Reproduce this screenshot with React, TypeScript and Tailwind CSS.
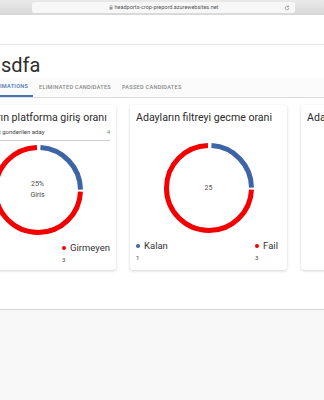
import React from 'react';

const font = { fontFamily: 'Roboto, "Liberation Sans", sans-serif' };

function Donut({ label, sub }: { label: string; sub?: string }) {
  // 25% blue, 75% red ring
  const c = 2 * Math.PI * 42.5;
  return (
    <div className="relative w-[90px] h-[90px]">
      <svg width="90" height="90" viewBox="0 0 90 90" className="-rotate-90">
        <circle cx="45" cy="45" r="42.5" fill="none" stroke="#3d64a5" strokeWidth="5"
          strokeDasharray={`${c * 0.25 - 3} ${c}`} strokeDashoffset={-2.5} />
        <circle cx="45" cy="45" r="42.5" fill="none" stroke="#f50000" strokeWidth="5"
          strokeDasharray={`${c * 0.75 - 3} ${c}`} strokeDashoffset={-(c * 0.25 + 1.5)} />
      </svg>
      <div className="absolute inset-0 flex flex-col items-center justify-center text-[7px] leading-[11px] text-[#4a4a4a]">
        <span>{label}</span>
        {sub && <span>{sub}</span>}
      </div>
    </div>
  );
}

function LegendItem({ color, name, value }: { color: string; name: string; value: string }) {
  return (
    <div className="flex flex-col">
      <div className="flex items-center gap-[4px] text-[9.5px] leading-[12px] text-[#333]">
        <span className={`w-[4px] h-[4px] rounded-full ${color}`} />
        <span>{name}</span>
      </div>
      <span className="text-[6px] leading-[8px] text-[#444] mt-[2px]">{value}</span>
    </div>
  );
}

export default function App() {
  return (
    <div className="w-[324px] h-[400px] overflow-hidden bg-white flex flex-col" style={font}>
      {/* browser chrome */}
      <div className="h-[15px] shrink-0 bg-gradient-to-b from-[#e9e9e9] to-[#d8d8d8] flex items-center pl-[32px] pr-[29px]">
        <div className="flex-1 h-[11px] rounded-[2px] bg-[#f7f7f7] flex items-center relative">
          <div className="flex-1 flex items-center justify-center gap-[2px] text-[5.5px] text-[#555]">
            <svg width="4" height="5" viewBox="0 0 4 5"><rect x="0.5" y="2" width="3" height="2.6" fill="#9a9a9a" /><path d="M1 2V1.3a1 1 0 012 0V2" stroke="#9a9a9a" strokeWidth="0.6" fill="none" /></svg>
            <span>headports-crop-prepord.azurewebsites.net</span>
          </div>
          <svg className="absolute right-[5px]" width="6" height="6" viewBox="0 0 10 10">
            <path d="M8 5a3 3 0 11-1-2.3" stroke="#8a8a8a" strokeWidth="1.2" fill="none" />
            <path d="M7.6 0.8v2.4H5.2" stroke="#8a8a8a" strokeWidth="1.2" fill="none" />
          </svg>
        </div>
      </div>
      <div className="h-[30px] shrink-0 border-b border-[#e6e6e6]" />

      {/* title + tabs */}
      <div className="pl-[1px] pt-[8px] h-[33px] shrink-0 text-[20px] leading-[24px] text-[#2e2e2e]">sdfa</div>
      <div className="h-[20px] shrink-0 flex items-stretch border-b border-[#dcdcdc] bg-[#fbfbfb] text-[5.6px] font-medium tracking-[0.25px] uppercase">
        <div className="w-[33px] flex items-center border-b-[2px] border-[#4a72b4] text-[#4a72b4]">imations</div>
        <div className="ml-[6px] flex items-center text-[#8a8a8a]">Eliminated candidates</div>
        <div className="ml-[11px] flex items-center text-[#8a8a8a]">Passed candidates</div>
      </div>

      {/* cards */}
      <div className="h-[211px] shrink-0 flex gap-[14px] ml-[-41px] pt-[7px]">
        <div className="w-[157px] h-[165px] shrink-0 bg-white rounded-[3px] shadow-[0_1px_3px_rgba(0,0,0,0.18)] px-[6px] pt-[5px] flex flex-col">
          <div className="text-[10.6px] leading-[16px] text-[#2b2b2b] whitespace-nowrap">Adayların platforma giriş oranı</div>
          <div className="flex justify-between items-center text-[6px] leading-[10px] mt-[1px] pb-[3px] border-b border-[#cfcfcf]">
            <span className="text-[#444] ml-[4px]">Toplam test gonderilen aday</span>
            <span className="text-[#4caf50]">4</span>
          </div>
          <div className="flex justify-center mt-[4px]">
            <Donut label="25%" sub="Giris" />
          </div>
          <div className="flex justify-between mt-[7px]">
            <LegendItem color="bg-[#3d64a5]" name="Giren" value="1" />
            <LegendItem color="bg-[#f50000]" name="Girmeyen" value="3" />
          </div>
        </div>

        <div className="w-[157px] h-[165px] shrink-0 bg-white rounded-[3px] shadow-[0_1px_3px_rgba(0,0,0,0.18)] px-[6px] pt-[5px] flex flex-col">
          <div className="text-[10.6px] leading-[16px] text-[#2b2b2b] whitespace-nowrap">Adayların filtreyi gecme orani</div>
          <div className="flex justify-center mt-[17px]">
            <Donut label="25" />
          </div>
          <div className="flex justify-between mt-[7px] pr-[3px]">
            <LegendItem color="bg-[#3d64a5]" name="Kalan" value="1" />
            <LegendItem color="bg-[#f50000]" name="Fail" value="3" />
          </div>
        </div>

        <div className="w-[157px] h-[165px] shrink-0 bg-white rounded-[3px] shadow-[0_1px_3px_rgba(0,0,0,0.18)] px-[6px] pt-[5px]">
          <div className="text-[10.6px] leading-[16px] text-[#2b2b2b] whitespace-nowrap">Adayların durumu</div>
        </div>
      </div>

      <div className="flex-1 bg-[#f8f8f8] border-t border-[#d6d6d6]" />
    </div>
  );
}
